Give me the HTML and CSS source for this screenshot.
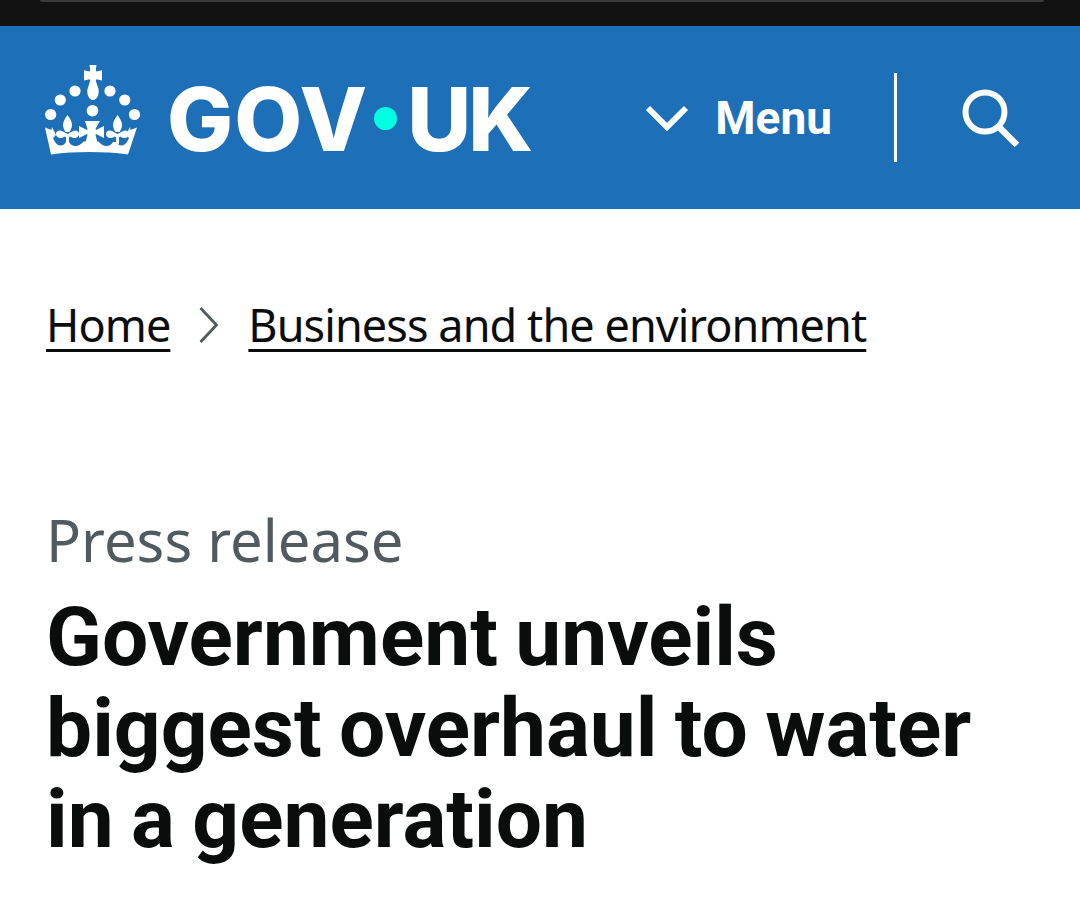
FILE: index.html
```html
<!DOCTYPE html>
<html lang="en">
<head>
<meta charset="utf-8">
<title>Government unveils biggest overhaul to water in a generation</title>
<link rel="stylesheet" href="styles.css">
</head>
<body>
<div class="status"><div class="status-edge"></div></div>
<header class="masthead">
  <a class="logo" href="#">
    <svg class="crown" viewBox="45 65 96 90" aria-hidden="true">
      <g fill="#fff">
        <path d="M89.500 65h7l-.8 5.200 .9 1.300 5.400-1.300v10.400l-5.400-1.300-.9 1.300 2.800 8.400c1 5.500-1.700 11-5.500 11s-6.500-5.500-5.500-11l2.800-8.400-.9-1.300-5.400 1.300V70.200l5.400 1.300.9-1.300z"/>
        <circle cx="50.700" cy="114.500" r="5.600"/>
        <circle cx="60.300" cy="100" r="5.600"/>
        <circle cx="75" cy="91" r="5.600"/>
        <circle cx="110" cy="91" r="5.600"/>
        <circle cx="124.800" cy="100" r="5.600"/>
        <circle cx="134.500" cy="114.500" r="5.600"/>
        <circle cx="92.500" cy="110.700" r="5.800"/>
        <g>
          <path d="M67.500 115c3 4 4.500 7 4.500 10 0 3-1.500 5-2.500 7h-4c-1-2-2.500-4-2.500-7 0-3 1.500-6 4.500-10z"/>
          <path d="M56 134c0-3 3-4.500 6-3l5.500 3 5.500-3c3-1.500 6 0 6 3 0 2-1.500 3.500-3.500 4-2 .3-4-.5-5.500-1.500l-1 1v7h-3v-7l-1-1c-1.500 1-3.500 1.800-5.500 1.500-2-.5-3.500-2-3.500-4z"/>
        </g>
        <g class="fleur-right">
          <path d="M67.500 115c3 4 4.500 7 4.500 10 0 3-1.500 5-2.500 7h-4c-1-2-2.500-4-2.500-7 0-3 1.500-6 4.500-10z"/>
          <path d="M56 134c0-3 3-4.500 6-3l5.500 3 5.500-3c3-1.500 6 0 6 3 0 2-1.500 3.500-3.500 4-2 .3-4-.5-5.500-1.500l-1 1v7h-3v-7l-1-1c-1.500 1-3.500 1.800-5.500 1.500-2-.5-3.500-2-3.500-4z"/>
        </g>
        <path d="M85 121h15l-4.500 8 .5 1 8-4v12l-8-4-.5 1 2.500 9h-13l2.500-9-.5-1-8 4v-12l8 4 .5-1z"/>
        <path d="M45 127.500l6.500 2.500.5-3 4 8-3 3c1.500 4 4 7 7 7.500 3 .3 5-1.500 6-3.500h3c1.500 2.500 3.500 4 6.500 4 3 0 6-2 8-4.500h15c2 2.500 5 4.500 8 4.500 3 0 5-1.500 6.500-4h3c1 2 3 3.800 6 3.500 3-.5 5.500-3.500 7-7.500l-3-3 4-8 .5 3 6.500-2.500-9 27c-25-3.200-52-3.200-77 0z"/>
      </g>
    </svg>
    <span class="wordmark"><span class="wordmark-gov">GOV</span><span class="wordmark-dot"></span><span class="wordmark-uk">UK</span></span>
  </a>
  <nav class="nav">
    <button class="menu" type="button">
      <svg class="chevron" viewBox="0 0 44 30" aria-hidden="true"><path d="M3 5l19 19L41 5" fill="none" stroke="#fff" stroke-width="6"/></svg>
      <span>Menu</span>
    </button>
    <div class="divider"></div>
    <button class="search" type="button" aria-label="Search">
      <svg class="search-icon" viewBox="0 0 58 60" aria-hidden="true"><circle cx="23" cy="24" r="19.500" fill="none" stroke="#fff" stroke-width="6"/><path d="M36 38l19 19" stroke="#fff" stroke-width="6.500" fill="none"/></svg>
    </button>
  </nav>
</header>
<main class="page">
  <nav class="crumbs">
    <a href="#">Home</a>
    <svg class="crumb-sep" viewBox="0 0 22 38" aria-hidden="true"><path d="M2.500 2l16 17-16 17" fill="none" stroke="#505a5f" stroke-width="2.800"/></svg>
    <a href="#">Business and the environment</a>
  </nav>
  <p class="kicker">Press release</p>
  <h1 class="title">Government unveils biggest overhaul to water in a generation</h1>
</main>
</body>
</html>
```

FILE: styles.css
```css
* { box-sizing: border-box; }
html, body { margin: 0; padding: 0; }
body {
  width: 1080px;
  height: 921px;
  overflow: hidden;
  background: #fff;
  color: #0b0c0c;
  font-family: "Noto Sans", "Liberation Sans", sans-serif;
}
.status {
  height: 26px;
  background: #121212;
  padding: 0 36px 0 40px;
}
.status-edge {
  height: 2px;
  background: #3a3a3a;
  border-radius: 0 0 6px 6px;
}
.masthead {
  height: 183px;
  background: #1d70b8;
  display: flex;
  align-items: center;
  justify-content: space-between;
  padding: 0 60px 0 45px;
  color: #fff;
}
.logo {
  display: flex;
  align-items: center;
  gap: 26px;
  color: #fff;
  text-decoration: none;
}
.crown { width: 96px; height: 90px; display: block; margin-bottom: 15px; }
.fleur-right { transform: translateX(50px); }
.wordmark {
  display: flex;
  align-items: center;
  font-family: Inter, sans-serif;
  font-weight: 800;
  font-size: 88px;
  line-height: 100px;
  padding-top: 2px;
}
.wordmark-gov { letter-spacing: 1px; }
.wordmark-uk { letter-spacing: -3px; }
.wordmark-dot {
  width: 23px;
  height: 23px;
  border-radius: 50%;
  background: #00ffe0;
  margin: 0 10px 0 6px;
}
.nav { display: flex; align-items: center; }
.menu, .search {
  background: none;
  border: 0;
  padding: 0;
  color: #fff;
  font: inherit;
  display: flex;
  align-items: center;
}
.menu { gap: 26px; font-family: Roboto, sans-serif; font-weight: 700; font-size: 46px; line-height: 60px; }
.chevron { width: 44px; height: 30px; }
.divider { width: 3px; height: 89px; background: #fff; margin: 0 65px 0 62px; }
.search-icon { width: 58px; height: 60px; display: block; }
.page { padding: 0 46px; }
.crumbs {
  display: flex;
  align-items: center;
  gap: 28px;
  margin-top: 86px;
  font-size: 45px;
  letter-spacing: -0.92px;
  line-height: 60px;
}
.crumbs a { color: #0b0c0c; text-decoration: underline; text-decoration-thickness: 3px; text-underline-offset: 7px; }
.crumb-sep { width: 22px; height: 38px; }
.kicker {
  margin: 150px 0 0;
  font-size: 58px;
  line-height: 70px;
  color: #505a5f;
}
.title {
  margin: 17px 0 0;
  font-family: Roboto, sans-serif;
  font-weight: 700;
  font-size: 82px;
  word-spacing: -3px;
  line-height: 91px;
  color: #0b0c0c;
}
```
